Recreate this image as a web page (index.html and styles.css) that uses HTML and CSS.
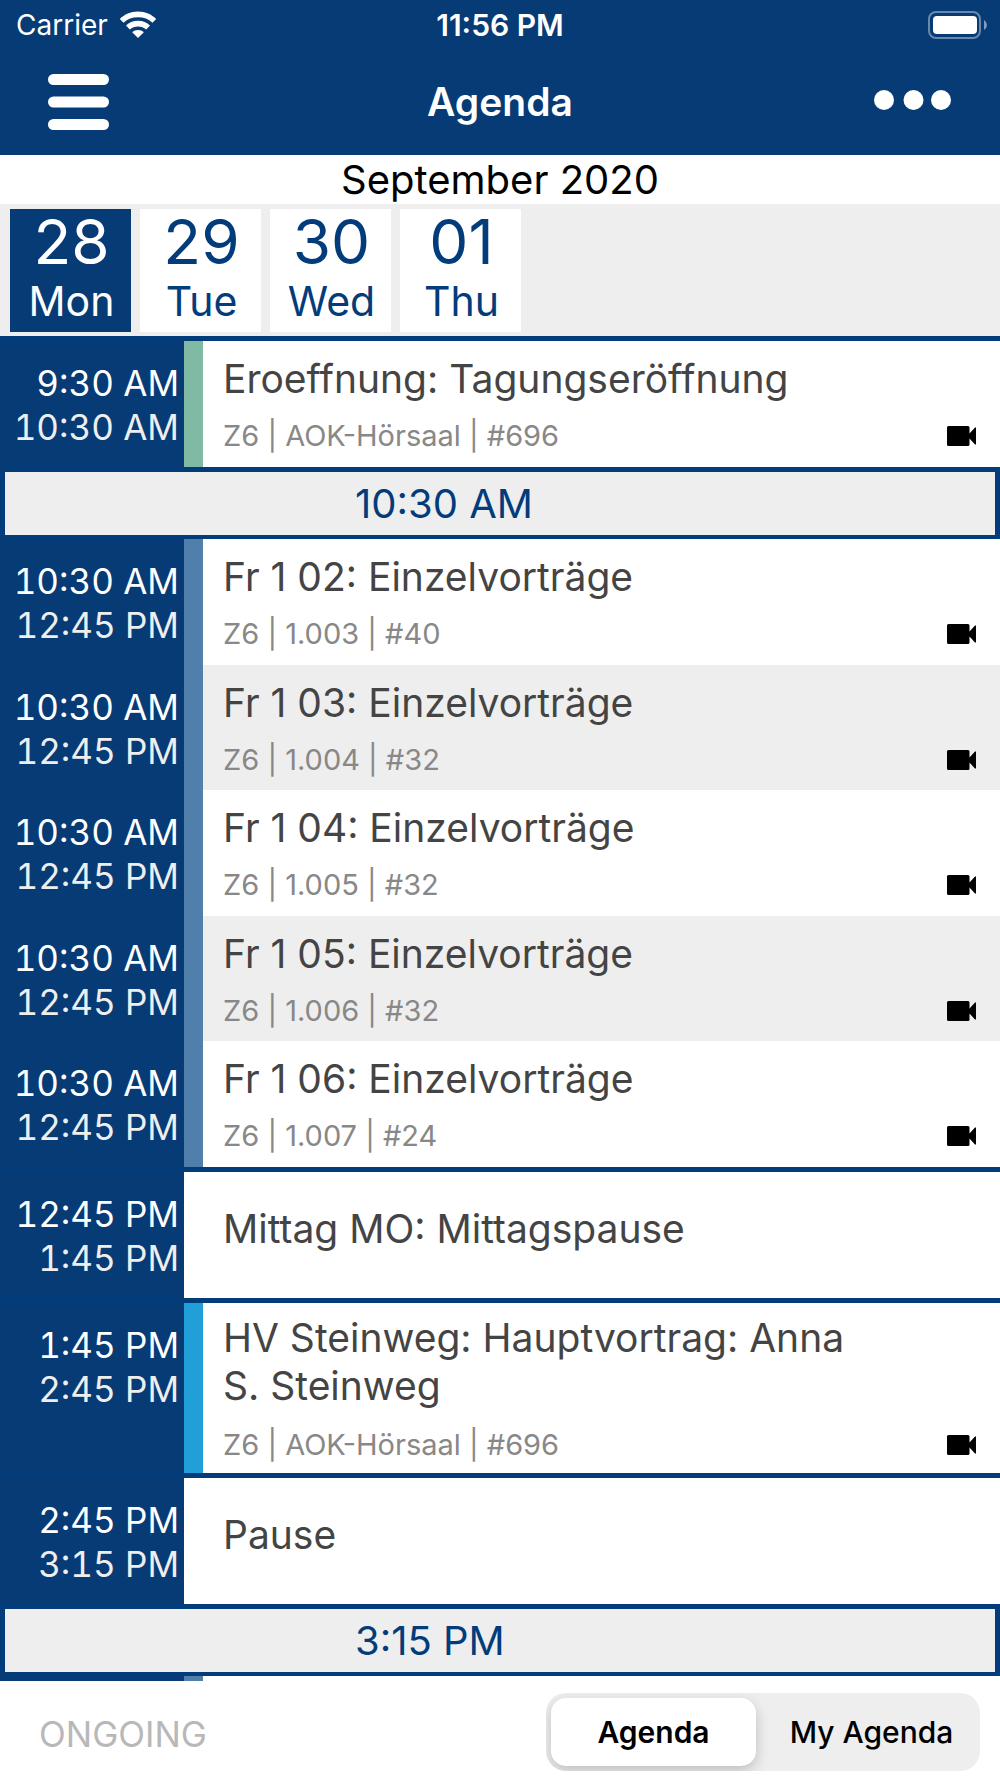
FILE: index.html
```
<!DOCTYPE html>
<html lang="en">
<head>
<meta charset="utf-8">
<meta name="viewport" content="width=device-width, initial-scale=1">
<title>Agenda</title>
<link rel="stylesheet" href="styles.css">
</head>
<body>
<svg width="0" height="0" class="sprite" aria-hidden="true">
  <symbol id="camera" viewBox="0 0 29 20">
    <path d="M1.5 0H21a1.5 1.5 0 0 1 1.5 1.5V7.500L28 1.500H29V18.500H28L22.500 12.500V18.500A1.500 1.500 0 0 1 21 20H1.500A1.500 1.500 0 0 1 0 18.500V1.500A1.500 1.500 0 0 1 1.500 0Z"/>
  </symbol>
</svg>

<header class="top">
  <div class="status">
    <div class="status-left">
      <span>Carrier</span>
      <svg width="38" height="28" viewBox="0 0 38 28" aria-hidden="true" fill="#fff">
        <path d="M19 0.500C26.500 .5 32.600 3.400 37.200 8L33.500 11.800C29.600 8 24.700 6.300 19 6.300S8.400 8 4.500 11.800L.8 8C5.400 3.400 11.500 .5 19 .5Z"/>
        <path d="M19 9.800C23.900 9.800 28 11.700 31 14.600L27.200 18.500C25 16.500 22.200 15.500 19 15.500S13 16.500 10.800 18.500L7 14.600C10 11.700 14.100 9.800 19 9.800Z"/>
        <path d="M19 19C21.300 19 23.300 19.900 24.800 21.200L19 27L13.200 21.200C14.700 19.900 16.700 19 19 19Z"/>
      </svg>
    </div>
    <span class="clock">11:56 PM</span>
    <svg class="battery" width="60" height="28" viewBox="0 0 60 28" aria-hidden="true">
      <rect x="1" y="1" width="51" height="26" rx="7" fill="none" stroke="#fff" stroke-opacity=".4" stroke-width="2"/>
      <rect x="5" y="5" width="44" height="18" rx="4" fill="#fff"/>
      <path d="M56 9q3 2 3 5t-3 5z" fill="#fff" fill-opacity=".5"/>
    </svg>
  </div>
  <nav class="nav">
    <button class="icon-button" type="button" aria-label="Menu">
      <svg width="62" height="58" viewBox="0 0 62 58" fill="#fff">
        <rect x="0" y="1" width="61" height="11" rx="5.500"/>
        <rect x="0" y="23.500" width="61" height="11" rx="5.500"/>
        <rect x="0" y="46" width="61" height="11" rx="5.500"/>
      </svg>
    </button>
    <h1 class="title">Agenda</h1>
    <button class="icon-button" type="button" aria-label="More">
      <svg width="78" height="24" viewBox="0 0 78 24" fill="#fff">
        <circle cx="10" cy="10" r="10"/>
        <circle cx="39.500" cy="10" r="10"/>
        <circle cx="67" cy="10" r="10"/>
      </svg>
    </button>
  </nav>
</header>

<h2 class="month">September 2020</h2>
<div class="days">
  <button class="day day-selected" type="button"><span class="day-number">28</span><span class="day-name">Mon</span></button>
  <button class="day" type="button"><span class="day-number">29</span><span class="day-name">Tue</span></button>
  <button class="day" type="button"><span class="day-number">30</span><span class="day-name">Wed</span></button>
  <button class="day" type="button"><span class="day-number">01</span><span class="day-name">Thu</span></button>
</div>

<main class="agenda">
  <article class="session divided">
    <div class="times"><time>9:30 AM</time><time>10:30 AM</time></div>
    <div class="details green">
      <h3>Eroeffnung: Tagungseröffnung</h3>
      <p class="meta">Z6 | AOK-Hörsaal | #696 <svg class="camera"><use href="#camera"/></svg></p>
    </div>
  </article>

  <h2 class="slot">10:30 AM</h2>

  <article class="session">
    <div class="times"><time>10:30 AM</time><time>12:45 PM</time></div>
    <div class="details steel">
      <h3>Fr 1 02: Einzelvorträge</h3>
      <p class="meta">Z6 | 1.003 | #40 <svg class="camera"><use href="#camera"/></svg></p>
    </div>
  </article>
  <article class="session shaded">
    <div class="times"><time>10:30 AM</time><time>12:45 PM</time></div>
    <div class="details steel">
      <h3>Fr 1 03: Einzelvorträge</h3>
      <p class="meta">Z6 | 1.004 | #32 <svg class="camera"><use href="#camera"/></svg></p>
    </div>
  </article>
  <article class="session">
    <div class="times"><time>10:30 AM</time><time>12:45 PM</time></div>
    <div class="details steel">
      <h3>Fr 1 04: Einzelvorträge</h3>
      <p class="meta">Z6 | 1.005 | #32 <svg class="camera"><use href="#camera"/></svg></p>
    </div>
  </article>
  <article class="session shaded">
    <div class="times"><time>10:30 AM</time><time>12:45 PM</time></div>
    <div class="details steel">
      <h3>Fr 1 05: Einzelvorträge</h3>
      <p class="meta">Z6 | 1.006 | #32 <svg class="camera"><use href="#camera"/></svg></p>
    </div>
  </article>
  <article class="session">
    <div class="times"><time>10:30 AM</time><time>12:45 PM</time></div>
    <div class="details steel">
      <h3>Fr 1 06: Einzelvorträge</h3>
      <p class="meta">Z6 | 1.007 | #24 <svg class="camera"><use href="#camera"/></svg></p>
    </div>
  </article>

  <article class="session divided">
    <div class="times"><time>12:45 PM</time><time>1:45 PM</time></div>
    <div class="details break"><h3>Mittag MO: Mittagspause</h3></div>
  </article>
  <article class="session divided">
    <div class="times"><time>1:45 PM</time><time>2:45 PM</time></div>
    <div class="details sky long">
      <h3>HV Steinweg: Hauptvortrag: Anna S. Steinweg</h3>
      <p class="meta">Z6 | AOK-Hörsaal | #696 <svg class="camera"><use href="#camera"/></svg></p>
    </div>
  </article>
  <article class="session divided">
    <div class="times"><time>2:45 PM</time><time>3:15 PM</time></div>
    <div class="details break"><h3>Pause</h3></div>
  </article>

  <h2 class="slot">3:15 PM</h2>

  <article class="session">
    <div class="times"></div>
    <div class="details steel"></div>
  </article>
</main>

<footer class="bottom">
  <button class="ongoing" type="button" disabled>ONGOING</button>
  <div class="tabs">
    <button class="tab tab-active" type="button" aria-pressed="true">Agenda</button>
    <button class="tab" type="button" aria-pressed="false">My Agenda</button>
  </div>
</footer>
</body>
</html>
```
FILE: styles.css
```
:root {
  --navy: #063b76;
  --line: #023c7b;
  --grey: #eeeeee;
}

* { box-sizing: border-box; }

body {
  margin: 0;
  height: 100vh;
  display: flex;
  flex-direction: column;
  background: #fff;
  color: #000;
  font-family: Inter, "Liberation Sans", sans-serif;
}

h1, h2, h3, p { margin: 0; font-weight: 400; }

button {
  margin: 0;
  padding: 0;
  border: 0;
  background: none;
  color: inherit;
  font: inherit;
}

svg { display: block; }
.sprite { position: absolute; }

/* Status bar and navigation */
.top { flex: none; background: var(--navy); color: #fff; }

.status {
  display: grid;
  grid-template-columns: 1fr auto 1fr;
  align-items: center;
  height: 50px;
  padding: 0 12px;
  font-size: 28px;
}
.status-left { display: flex; align-items: center; gap: 11px; padding-left: 4px; }
.clock { font-size: 30px; font-weight: 600; }
.battery { justify-self: end; }

.nav {
  display: grid;
  grid-template-columns: 1fr auto 1fr;
  align-items: center;
  height: 105px;
  padding: 0 48px 2px;
}
.icon-button:last-child { justify-self: end; }
.icon-button:first-child { justify-self: start; }
.title { font-size: 39px; font-weight: 600; }

/* Date picker */
.month { flex: none; font-size: 40px; line-height: 49px; text-align: center; }

.days {
  flex: none;
  display: flex;
  gap: 9px;
  padding: 5px 10px 4px;
  background: var(--grey);
}
.day {
  width: 121px;
  padding: 0 0 4px 2px;
  background: #fff;
  color: var(--line);
}
.day-selected { background: var(--navy); color: #fff; }
.day-number, .day-name { display: block; }
.day-number { font-size: 62px; line-height: 66px; }
.day-name { font-size: 41px; line-height: 53px; }

/* Session list */
.agenda { flex: 1; min-height: 0; overflow: hidden; }

.session {
  display: grid;
  grid-template-columns: 184px 1fr;
  min-height: 125px;
  background: var(--navy);
}
.divided { border-top: 5px solid var(--line); }

.times {
  display: flex;
  flex-direction: column;
  padding: 20px 5px 0 0;
  color: #fff;
  font-size: 35px;
  font-variant-numeric: tabular-nums;
  line-height: 44px;
  text-align: right;
  white-space: nowrap;
}
.times time + time { color: var(--grey); }

.details {
  padding: 14px 24px 14px 20px;
  border-left: 19px solid #fff;
  background: #fff;
  color: #444;
}
.details h3 { padding-right: 100px; font-size: 39px; line-height: 48px; }
.shaded .details { padding-bottom: 13px; background: var(--grey); }
.break { padding: 33px 24px 45px 20px; }
.long { padding-top: 11px; padding-bottom: 11px; }
.green { border-left-color: #80b9a4; }
.steel { border-left-color: #517fab; }
.sky { border-left-color: #219fd8; }

.meta {
  display: flex;
  align-items: center;
  justify-content: space-between;
  margin-top: 16px;
  color: #888;
  font-size: 29px;
  line-height: 34px;
}
.long .meta { margin-top: 18px; }
.camera { width: 29px; height: 20px; fill: #000; }

.slot {
  padding-left: 350px;
  border: 5px solid var(--line);
  border-bottom-width: 4px;
  background: var(--grey);
  color: var(--line);
  font-size: 40px;
  line-height: 63px;
}

/* Bottom bar */
.bottom {
  flex: none;
  display: flex;
  align-items: center;
  justify-content: space-between;
  height: 97px;
  padding: 5px 20px 0 39px;
}
.ongoing { padding-top: 3px; color: #b8b8b8; font-size: 35px; }

.tabs {
  display: flex;
  padding: 5px;
  border-radius: 20px;
  background: var(--grey);
  overflow: hidden;
}
.tab {
  width: 219px;
  padding-left: 12px;
  border-radius: 15px;
  font-size: 30px;
  font-weight: 500;
  line-height: 68px;
}
.tab-active {
  width: 205px;
  padding-left: 0;
  background: #fff;
  font-weight: 600;
  box-shadow: 0 5px 14px rgba(0, 0, 0, .2);
}
```
